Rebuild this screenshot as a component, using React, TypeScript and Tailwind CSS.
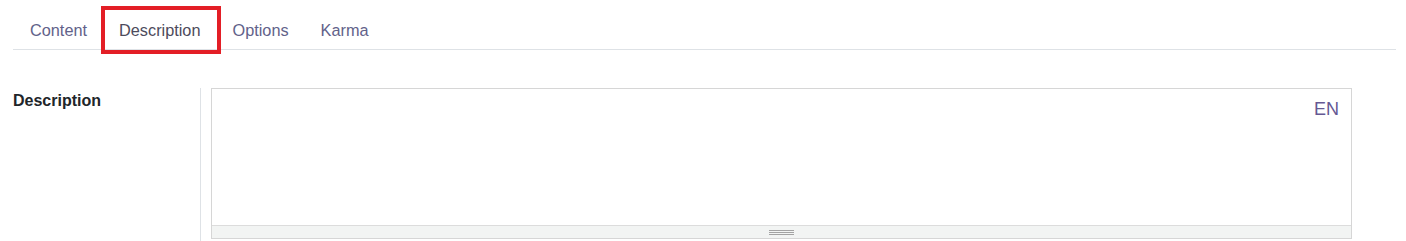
const tabs = ["Content", "Description", "Options", "Karma"];

export default function App() {
  return (
    <div className="h-[241px] w-[1406px] overflow-hidden bg-white pl-[13px] pr-[10px] font-['Liberation_Sans',Arial,sans-serif] text-[16px]">
      <nav className="mt-[7px] flex border-b border-[#dee2e6] pl-px text-[16.3px]">
        {tabs.map((t) => (
          <div
            key={t}
            className={
              t === "Description"
                ? "relative px-4 pb-[7px] pt-[11px] leading-6 text-[#4d4b5c]"
                : "px-4 pb-[7px] pt-[11px] leading-6 text-[#62628a]"
            }
          >
            {t}
            {t === "Description" ? (
              <span className="absolute left-[-2px] top-[-1px] h-[48px] w-[120px] border-4 border-[#e31e26]" />
            ) : null}
          </div>
        ))}
      </nav>

      <div className="mt-[38px] flex h-[153px]">
        <div className="w-[187px] pt-px font-bold leading-6 text-[#212529]">Description</div>
        <div className="border-l border-[#dee2e6] pl-[10px]">
          <div className="relative flex h-[151px] w-[1141px] flex-col border border-[#d6d6d6]">
            <span className="absolute right-[12px] top-[8px] text-[18px] leading-6 text-[#655893]">EN</span>
            <div className="flex-1" />
            <div className="flex h-[13px] items-center justify-center border-t border-[#dcdcdc] bg-[#f2f4f3]">
              <div className="flex w-[25px] flex-col gap-[1px]">
                <span className="h-px bg-[#a3a3a3]" />
                <span className="h-px bg-[#a3a3a3]" />
                <span className="h-px bg-[#a3a3a3]" />
              </div>
            </div>
          </div>
        </div>
      </div>
    </div>
  );
}
